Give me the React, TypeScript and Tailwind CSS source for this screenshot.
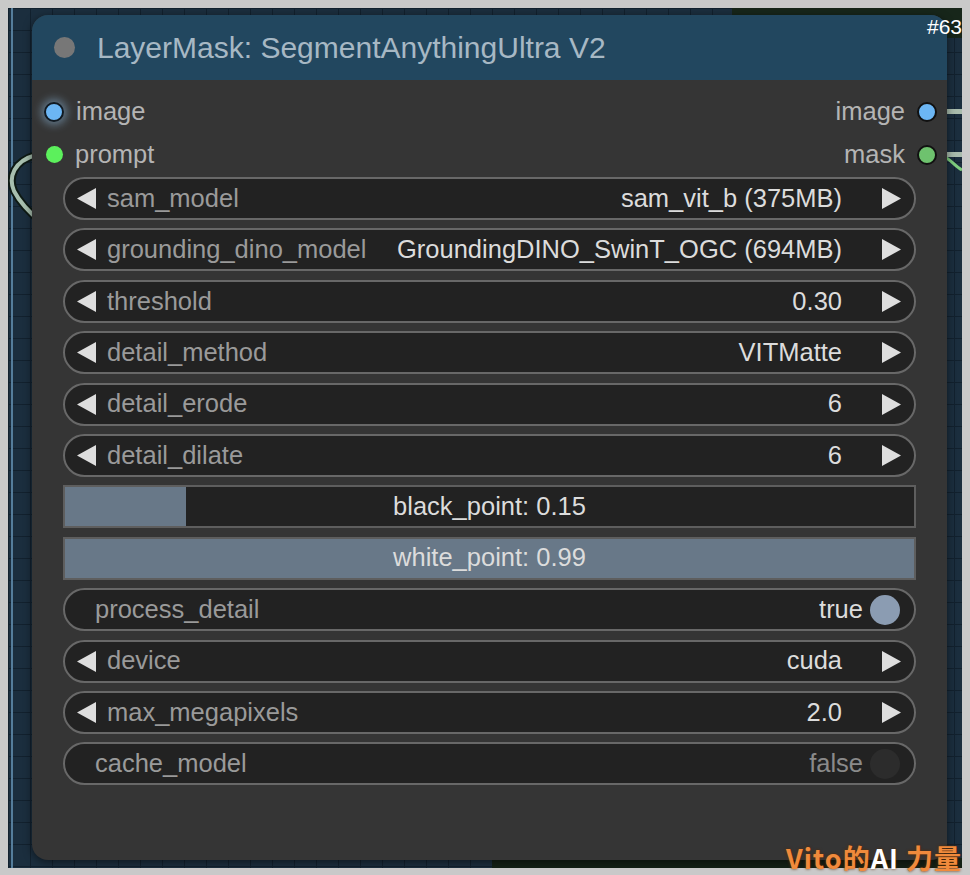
import React from "react";

type Row =
  | { kind: "combo"; label: string; value: string }
  | { kind: "slider"; label: string; value: number }
  | { kind: "toggle"; label: string; value: boolean };

const rows: Row[] = [
  { kind: "combo", label: "sam_model", value: "sam_vit_b (375MB)" },
  { kind: "combo", label: "grounding_dino_model", value: "GroundingDINO_SwinT_OGC (694MB)" },
  { kind: "combo", label: "threshold", value: "0.30" },
  { kind: "combo", label: "detail_method", value: "VITMatte" },
  { kind: "combo", label: "detail_erode", value: "6" },
  { kind: "combo", label: "detail_dilate", value: "6" },
  { kind: "slider", label: "black_point", value: 0.15 },
  { kind: "slider", label: "white_point", value: 0.99 },
  { kind: "toggle", label: "process_detail", value: true },
  { kind: "combo", label: "device", value: "cuda" },
  { kind: "combo", label: "max_megapixels", value: "2.0" },
  { kind: "toggle", label: "cache_model", value: false },
];

// slider range used by the node (0.01 .. 0.99)
const pct = (v: number) => Math.min(1, Math.max(0, (v - 0.01) / 0.98)) * 100;

function ArrowLeft() {
  return (
    <svg width="19" height="21" viewBox="0 0 19 21" className="shrink-0">
      <polygon points="19,0 19,21 0,10.5" fill="#dedede" />
    </svg>
  );
}

function ArrowRight() {
  return (
    <svg width="19" height="21" viewBox="0 0 19 21" className="shrink-0">
      <polygon points="0,0 0,21 19,10.5" fill="#dedede" />
    </svg>
  );
}

function Widget({ row }: { row: Row }) {
  if (row.kind === "slider") {
    return (
      <div className="relative h-[43px] border-2 border-[#5e5e5e] bg-[#222222] overflow-hidden">
        <div className="absolute left-0 top-0 bottom-0 bg-[#687888]" style={{ width: `${pct(row.value)}%` }} />
        <div className="relative flex h-full items-center justify-center text-[#dcdcdc]">
          {row.label}: {row.value.toFixed(2)}
        </div>
      </div>
    );
  }
  if (row.kind === "toggle") {
    return (
      <div className="flex h-[43px] items-center rounded-full border-2 border-[#686868] bg-[#222222] pl-[30px] pr-[14px]">
        <span className="text-[#9a9a9a]">{row.label}</span>
        <span className={`ml-auto ${row.value ? "text-[#dcdcdc]" : "text-[#8a8a8a]"}`}>{row.value ? "true" : "false"}</span>
        <span className={`ml-[7px] h-[30px] w-[30px] rounded-full ${row.value ? "bg-[#8b9cb2]" : "bg-[#2c2c2c]"}`} />
      </div>
    );
  }
  return (
    <div className="flex h-[43px] items-center rounded-full border-2 border-[#686868] bg-[#222222] pl-[12px] pr-[13px]">
      <ArrowLeft />
      <span className="ml-[11px] text-[#9a9a9a]">{row.label}</span>
      <span className="ml-auto text-[#dcdcdc]">{row.value}</span>
      <span className="ml-[40px]">
        <ArrowRight />
      </span>
    </div>
  );
}

export default function App() {
  return (
    <div className="h-[875px] w-[970px] bg-[#c9c9c9] pt-2 pl-2 pr-2 pb-[7px] font-['Liberation_Sans',Arial,sans-serif] relative overflow-hidden">
      {/* canvas */}
      <div className="relative h-full w-full overflow-hidden bg-[#1b2e3e] bg-[linear-gradient(#12212e_1px,transparent_1px),linear-gradient(90deg,#12212e_1px,transparent_1px)] bg-[size:22px_22px]">
        <div className="absolute left-[3px] top-0 bottom-0 w-[2px] bg-[#557d9b]" />
        {/* neighbouring node fragments */}
        <div className="absolute right-0 top-0 h-[30px] w-[230px] bg-[#17261a]" />
        <div className="absolute right-0 bottom-0 h-[10px] w-[470px] bg-[#142116]" />

        {/* wires */}
        <svg className="absolute left-0 top-[135px]" width="40" height="90" viewBox="0 0 40 90">
          <path d="M28 12 C6 18 0 34 6 48 C12 60 22 70 34 80" fill="none" stroke="#0e1a14" strokeWidth="8" />
          <path d="M28 12 C6 18 0 34 6 48 C12 60 22 70 34 80" fill="none" stroke="#a7bfae" strokeWidth="4" />
        </svg>
        <div className="absolute right-0 top-[101px] h-[5px] w-[20px] bg-[#a9bcad]" />
        <div className="absolute right-0 top-[144px] h-[5px] w-[20px] bg-[#a9bcad]" />
        <svg className="absolute right-0 top-[140px]" width="20" height="30" viewBox="0 0 20 30">
          <path d="M0 8 C8 10 12 18 20 22" fill="none" stroke="#7fcf7f" strokeWidth="3" />
        </svg>

        {/* node */}
        <div className="absolute left-[24px] top-[7px] flex h-[845px] w-[915px] flex-col overflow-hidden rounded-[16px] bg-[#353535] text-[25.5px] leading-none shadow-[0_2px_8px_rgba(0,0,0,0.5)]">
          <div className="flex h-[65px] shrink-0 items-center bg-[#22475f] pl-[22px]">
            <span className="h-[21px] w-[21px] rounded-full bg-[#777777]" />
            <span className="ml-[22px] text-[30px] text-[#a7b8c4]">LayerMask: SegmentAnythingUltra V2</span>
          </div>

          <div className="flex flex-col px-[31px] pt-[19px]">
            <div className="flex h-[25px] items-center justify-between">
              <div className="flex items-center -ml-[19px]">
                <span className="h-[20px] w-[20px] rounded-full border-2 border-[#111a22] bg-[#6cb6f4] shadow-[0_0_8px_3px_rgba(150,200,240,0.45)]" />
                <span className="ml-[12px] text-[#b4b4b4]">image</span>
              </div>
              <div className="flex items-center -mr-[21px]">
                <span className="text-[#b4b4b4]">image</span>
                <span className="ml-[12px] h-[20px] w-[20px] rounded-full border-2 border-[#111] bg-[#6cb6f4]" />
              </div>
            </div>
            <div className="mt-[18px] flex h-[25px] items-center justify-between">
              <div className="flex items-center -ml-[17px]">
                <span className="h-[17px] w-[17px] rounded-full bg-[#5cf05c]" />
                <span className="ml-[12px] text-[#b4b4b4]">prompt</span>
              </div>
              <div className="flex items-center -mr-[21px]">
                <span className="text-[#b4b4b4]">mask</span>
                <span className="ml-[12px] h-[20px] w-[20px] rounded-full border-2 border-[#111] bg-[#6ec26e]" />
              </div>
            </div>

            <div className="mt-[10px] flex flex-col gap-[8.4px]">
              {rows.map((r) => (
                <Widget key={r.label} row={r} />
              ))}
            </div>
          </div>
        </div>

        <div className="absolute right-0 top-[3px] text-[21px] text-white">#63</div>
      </div>

      {/* watermark */}
      <div className="absolute right-[8px] bottom-[-3px] text-[27px] font-bold tracking-[1px] [text-shadow:0_0_3px_#5a2a00] font-['Noto_Sans_CJK_SC',sans-serif]">
        <span className="text-[#f08a3c]">Vito的</span>
        <span className="text-white">AI</span>
        <span className="text-[#f08a3c]"> 力量</span>
      </div>
    </div>
  );
}
